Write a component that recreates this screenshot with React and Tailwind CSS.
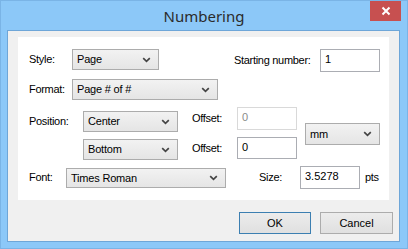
import React from "react";

const font = { fontFamily: '"Liberation Sans", Arial, sans-serif' };

function Chevron() {
  return (
    <svg width="9" height="6" viewBox="0 0 9 6" className="shrink-0">
      <path d="M1.2 1.2 L4.5 4.3 L7.8 1.2" stroke="#444444" strokeWidth="1.7" fill="none" />
    </svg>
  );
}

function Select({ value, className }) {
  return (
    <div
      className={
        "flex items-center justify-between border border-[#acacac] bg-gradient-to-b from-[#f2f2f2] to-[#e5e5e5] pl-[4px] pr-[7px] text-[11px] tracking-[-0.2px] text-black " +
        className
      }
    >
      <span>{value}</span>
      <Chevron />
    </div>
  );
}

function Input({ value, disabled, className }) {
  return (
    <div
      className={
        "flex items-start border bg-white pl-[4px] pt-[1px] text-[11px] " +
        (disabled ? "border-[#d9d9d9] text-[#8a8a8a] " : "border-[#abadb3] text-black ") +
        className
      }
    >
      {value}
    </div>
  );
}

function Label({ children, className }) {
  return <div className={"flex items-center text-[11px] tracking-[-0.3px] text-black " + className}>{children}</div>;
}

export default function App() {
  return (
    <div className="w-[408px] h-[249px] bg-[#8cc8f8] flex flex-col border border-[#7ab4e6]" style={font}>
      <div className="h-[29px] shrink-0 flex relative">
        <div className="flex-1 flex items-center justify-center pt-[1px] text-[15px] text-[#2b2b2b]" style={{ fontFamily: '"Noto Sans", "Open Sans", sans-serif' }}>
          Numbering
        </div>
        <div className="absolute left-[369px] top-0 w-[31px] h-[20px] bg-[#c75050] flex items-center justify-center">
          <svg width="10" height="10" viewBox="0 0 10 10">
            <path d="M1.5 1.5 L8.5 8.5 M8.5 1.5 L1.5 8.5" stroke="white" strokeWidth="2" />
          </svg>
        </div>
      </div>
      <div className="ml-[6px] mr-[7px] h-[212px] bg-[#f0f0f0] border border-[#6ea6d8] flex flex-col pl-[10px] pr-[10px] pt-[6px]">
        <div className="w-[371px] h-[163px] bg-white flex flex-col pl-[11px] pt-[12px]">
          {/* Row A */}
          <div className="flex items-start h-[23px]">
            <Label className="w-[43px] h-[21px]">Style:</Label>
            <Select value="Page" className="w-[87px] h-[21px]" />
            <Label className="ml-[75px] w-[86px] h-[23px]">Starting number:</Label>
            <Input value="1" className="w-[60px] h-[23px]" />
          </div>
          {/* Row B */}
          <div className="flex items-start h-[21px] mt-[7px]">
            <Label className="w-[43px] h-[21px]">Format:</Label>
            <Select value="Page # of #" className="w-[146px] h-[21px]" />
          </div>
          {/* Row C */}
          <div className="flex items-start h-[53px] mt-[7px]">
            <Label className="w-[54px] h-[21px] mt-[4px]">Position:</Label>
            <div className="flex flex-col w-[95px] mt-[4px]">
              <Select value="Center" className="w-[95px] h-[21px]" />
              <Select value="Bottom" className="w-[95px] h-[21px] mt-[7px]" />
            </div>
            <div className="flex flex-col w-[45px] ml-[14px]">
              <Label className="h-[23px]">Offset:</Label>
              <Label className="h-[22px] mt-[7px]">Offset:</Label>
            </div>
            <div className="flex flex-col w-[60px]">
              <Input value="0" disabled className="w-[60px] h-[23px]" />
              <Input value="0" className="w-[60px] h-[22px] mt-[7px]" />
            </div>
            <Select value="mm" className="w-[75px] h-[22px] ml-[8px] mt-[16px]" />
          </div>
          {/* Row D */}
          <div className="flex items-start h-[23px] mt-[6px]">
            <Label className="w-[37px] h-[23px]">Font:</Label>
            <Select value="Times Roman" className="w-[160px] h-[20px] mt-[2px]" />
            <Label className="ml-[33px] w-[41px] h-[23px]">Size:</Label>
            <Input value="3.5278" className="w-[60px] h-[23px]" />
            <Label className="ml-[5px] h-[23px]">pts</Label>
          </div>
        </div>
        <div className="flex justify-end mt-[12px] w-[375px]">
          <div className="w-[72px] h-[22px] border border-[#3c7fb1] bg-gradient-to-b from-[#ececec] to-[#e0e0e0] flex items-center justify-center text-[11px] text-black">
            OK
          </div>
          <div className="w-[73px] h-[22px] ml-[9px] border border-[#acacac] bg-gradient-to-b from-[#ececec] to-[#e0e0e0] flex items-center justify-center text-[11px] text-black">
            Cancel
          </div>
        </div>
      </div>
    </div>
  );
}
